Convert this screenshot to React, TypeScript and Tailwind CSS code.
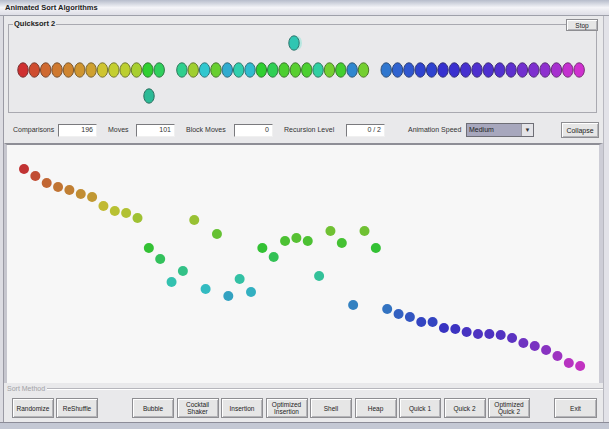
import React from "react";

const YS = [
  169, 176, 183, 187, 190, 194, 197, 206, 211, 213,
  218, 248, 259, 282, 271, 220, 289, 234, 296, 279,
  292, 248, 257, 241, 238, 241, 276, 231, 243, 305,
  231, 248, 309, 314, 317, 322, 322, 328, 329, 332,
  334, 334, 335, 338, 343, 346, 350, 356, 363, 366,
];
const hue = (y: number) => ((y - 169) / 197) * 300;
const LIFTED = [13, 31];

function Btn({ children, className = "" }: { children: React.ReactNode; className?: string }) {
  return (
    <div
      className={
        "flex items-center justify-center text-center leading-[7px] text-[6.5px] text-[#222] bg-[#e6e6e6] border border-[#8e8e92] shadow-[inset_1px_1px_0_#ffffff,inset_-1px_-1px_0_#b4b4b8] " +
        className
      }
    >
      {children}
    </div>
  );
}

function Field({ value, w }: { value: string; w: string }) {
  return (
    <div
      className={
        "h-[13px] bg-white border border-t-[#7a7a7e] border-l-[#7a7a7e] border-r-[#f0f0f0] border-b-[#f0f0f0] flex items-center justify-end pr-[3px] text-[7px] " +
        w
      }
    >
      {value}
    </div>
  );
}

export default function App() {
  return (
    <div className="w-[609px] h-[429px] bg-[#e9e9eb] flex flex-col overflow-hidden font-['Liberation_Sans',Arial,sans-serif] text-[#1e1e1e]">
      {/* title bar */}
      <div className="h-[16px] shrink-0 bg-linear-to-b from-[#b6bccb] via-[#f4f4f8] to-[#dedee6] border-b border-[#9ea0aa] flex items-center pl-[5px] pt-[1px] text-[7.5px] font-bold text-[#202020]">
        Animated Sort Algorithms
      </div>

      <div className="flex h-[406px] shrink-0">
        <div className="w-[4px] bg-[#dcdce2] border-r border-[#9a9aa4]" />

        <div className="w-[599px] flex flex-col">
          {/* group box */}
          <div className="ml-[4px] mt-[8px] w-[589px] h-[89px] border border-[#a9a9b0] relative">
            <div className="absolute left-[4px] -top-[5px] bg-[#e9e9eb] px-[1px] text-[7.5px] font-bold leading-none text-[#202020]">
              Quicksort 2
            </div>
            <Btn className="absolute left-[557px] -top-[6px] w-[32px] h-[12px]">Stop</Btn>
            <svg width="587" height="87" viewBox="9 25 587 87">
              {YS.map((y, i) => {
                if (LIFTED.includes(i)) return null;
                const h = hue(y);
                return (
                  <ellipse
                    key={i}
                    cx={23 + i * 11.35}
                    cy={70}
                    rx={5.2}
                    ry={7.2}
                    fill={`hsl(${h},62%,50%)`}
                    stroke={`hsl(${h},45%,33%)`}
                    strokeWidth={1}
                  />
                );
              })}
              <ellipse cx={297} cy={43} rx={5} ry={7} fill="hsl(172,60%,75%)" opacity={0.6} />
              <ellipse cx={294} cy={43} rx={5.2} ry={7.2} fill="hsl(172,62%,48%)" stroke="hsl(172,45%,32%)" />
              <ellipse cx={149} cy={96} rx={5.2} ry={7.2} fill="hsl(165,62%,45%)" stroke="hsl(165,45%,30%)" />
            </svg>
          </div>

          {/* stats row */}
          <div className="mt-[9px] h-[16px] flex items-center pl-[9px] text-[7px] text-[#333]">
            <span className="w-[45px]">Comparisons</span>
            <Field value="196" w="w-[39px]" />
            <span className="w-[11px]" />
            <span className="w-[28px]">Moves</span>
            <Field value="101" w="w-[39px]" />
            <span className="w-[11px]" />
            <span className="w-[48px]">Block Moves</span>
            <Field value="0" w="w-[39px]" />
            <span className="w-[11px]" />
            <span className="w-[62px]">Recursion Level</span>
            <Field value="0 / 2" w="w-[39px]" />
            <span className="w-[23px]" />
            <span className="w-[58px]">Animation Speed</span>
            <div className="w-[68px] h-[14px] border border-[#6e6e76] bg-[#a7a7bd] flex items-center">
              <span className="flex-1 pl-[2px] text-[7px] text-[#222]">Medium</span>
              <div className="w-[12px] h-[12px] bg-[#e4e4e8] border-l border-[#9a9aa0] flex items-center justify-center text-[6px] leading-none">
                ▼
              </div>
            </div>
            <span className="w-[27px]" />
            <Btn className="w-[38px] h-[16px] text-[7px]">Collapse</Btn>
          </div>

          {/* canvas */}
          <div className="mt-[5px] h-[240px] border-t-2 border-t-[#8e8e96] border-l-[3px] border-l-[#c6c6ce] border-r-[4px] border-r-[#cdcdd6] bg-[#f7f7f7]">
            <svg width="592" height="238" viewBox="7 145 592 238" className="block">
              {YS.map((y, i) => (
                <circle key={i} cx={24 + i * 11.35} cy={y} r={5} fill={`hsl(${hue(y)},58%,48%)`} />
              ))}
            </svg>
          </div>

          {/* sort method */}
          <div className="h-[39px] flex flex-col">
            <div className="mt-[1px] h-[9px] flex items-center">
              <span className="pl-[3px] pr-[2px] text-[7px] text-[#a2a2a6] leading-none">Sort Method</span>
              <div className="flex-1 h-[2px] border-t border-[#b6b6bc] border-b border-b-white" />
            </div>
            <div className="mt-[5px] h-[20px] flex pl-[8px]">
              <div className="flex gap-[2px]">
                <Btn className="w-[42px] h-[20px]">Randomize</Btn>
                <Btn className="w-[42px] h-[20px]">ReShuffle</Btn>
              </div>
              <div className="ml-[34px] flex gap-[2.5px]">
                <Btn className="w-[42px] h-[20px]">Bubble</Btn>
                <Btn className="w-[42px] h-[20px]">
                  Cocktail
                  <br />
                  Shaker
                </Btn>
                <Btn className="w-[42px] h-[20px]">Insertion</Btn>
                <Btn className="w-[42px] h-[20px]">
                  Optimized
                  <br />
                  Insertion
                </Btn>
                <Btn className="w-[42px] h-[20px]">Shell</Btn>
                <Btn className="w-[42px] h-[20px]">Heap</Btn>
                <Btn className="w-[42px] h-[20px]">Quick 1</Btn>
                <Btn className="w-[42px] h-[20px]">Quick 2</Btn>
                <Btn className="w-[42px] h-[20px]">
                  Optimized
                  <br />
                  Quick 2
                </Btn>
              </div>
              <Btn className="ml-[24px] w-[43px] h-[20px]">Exit</Btn>
            </div>
          </div>
        </div>

        <div className="w-[6px] bg-[#e2e2e8] border-l border-[#b8b8c0]" />
      </div>

      <div className="h-[7px] shrink-0 bg-[#c4c8d4] border-t border-[#8c8c98]" />
    </div>
  );
}
